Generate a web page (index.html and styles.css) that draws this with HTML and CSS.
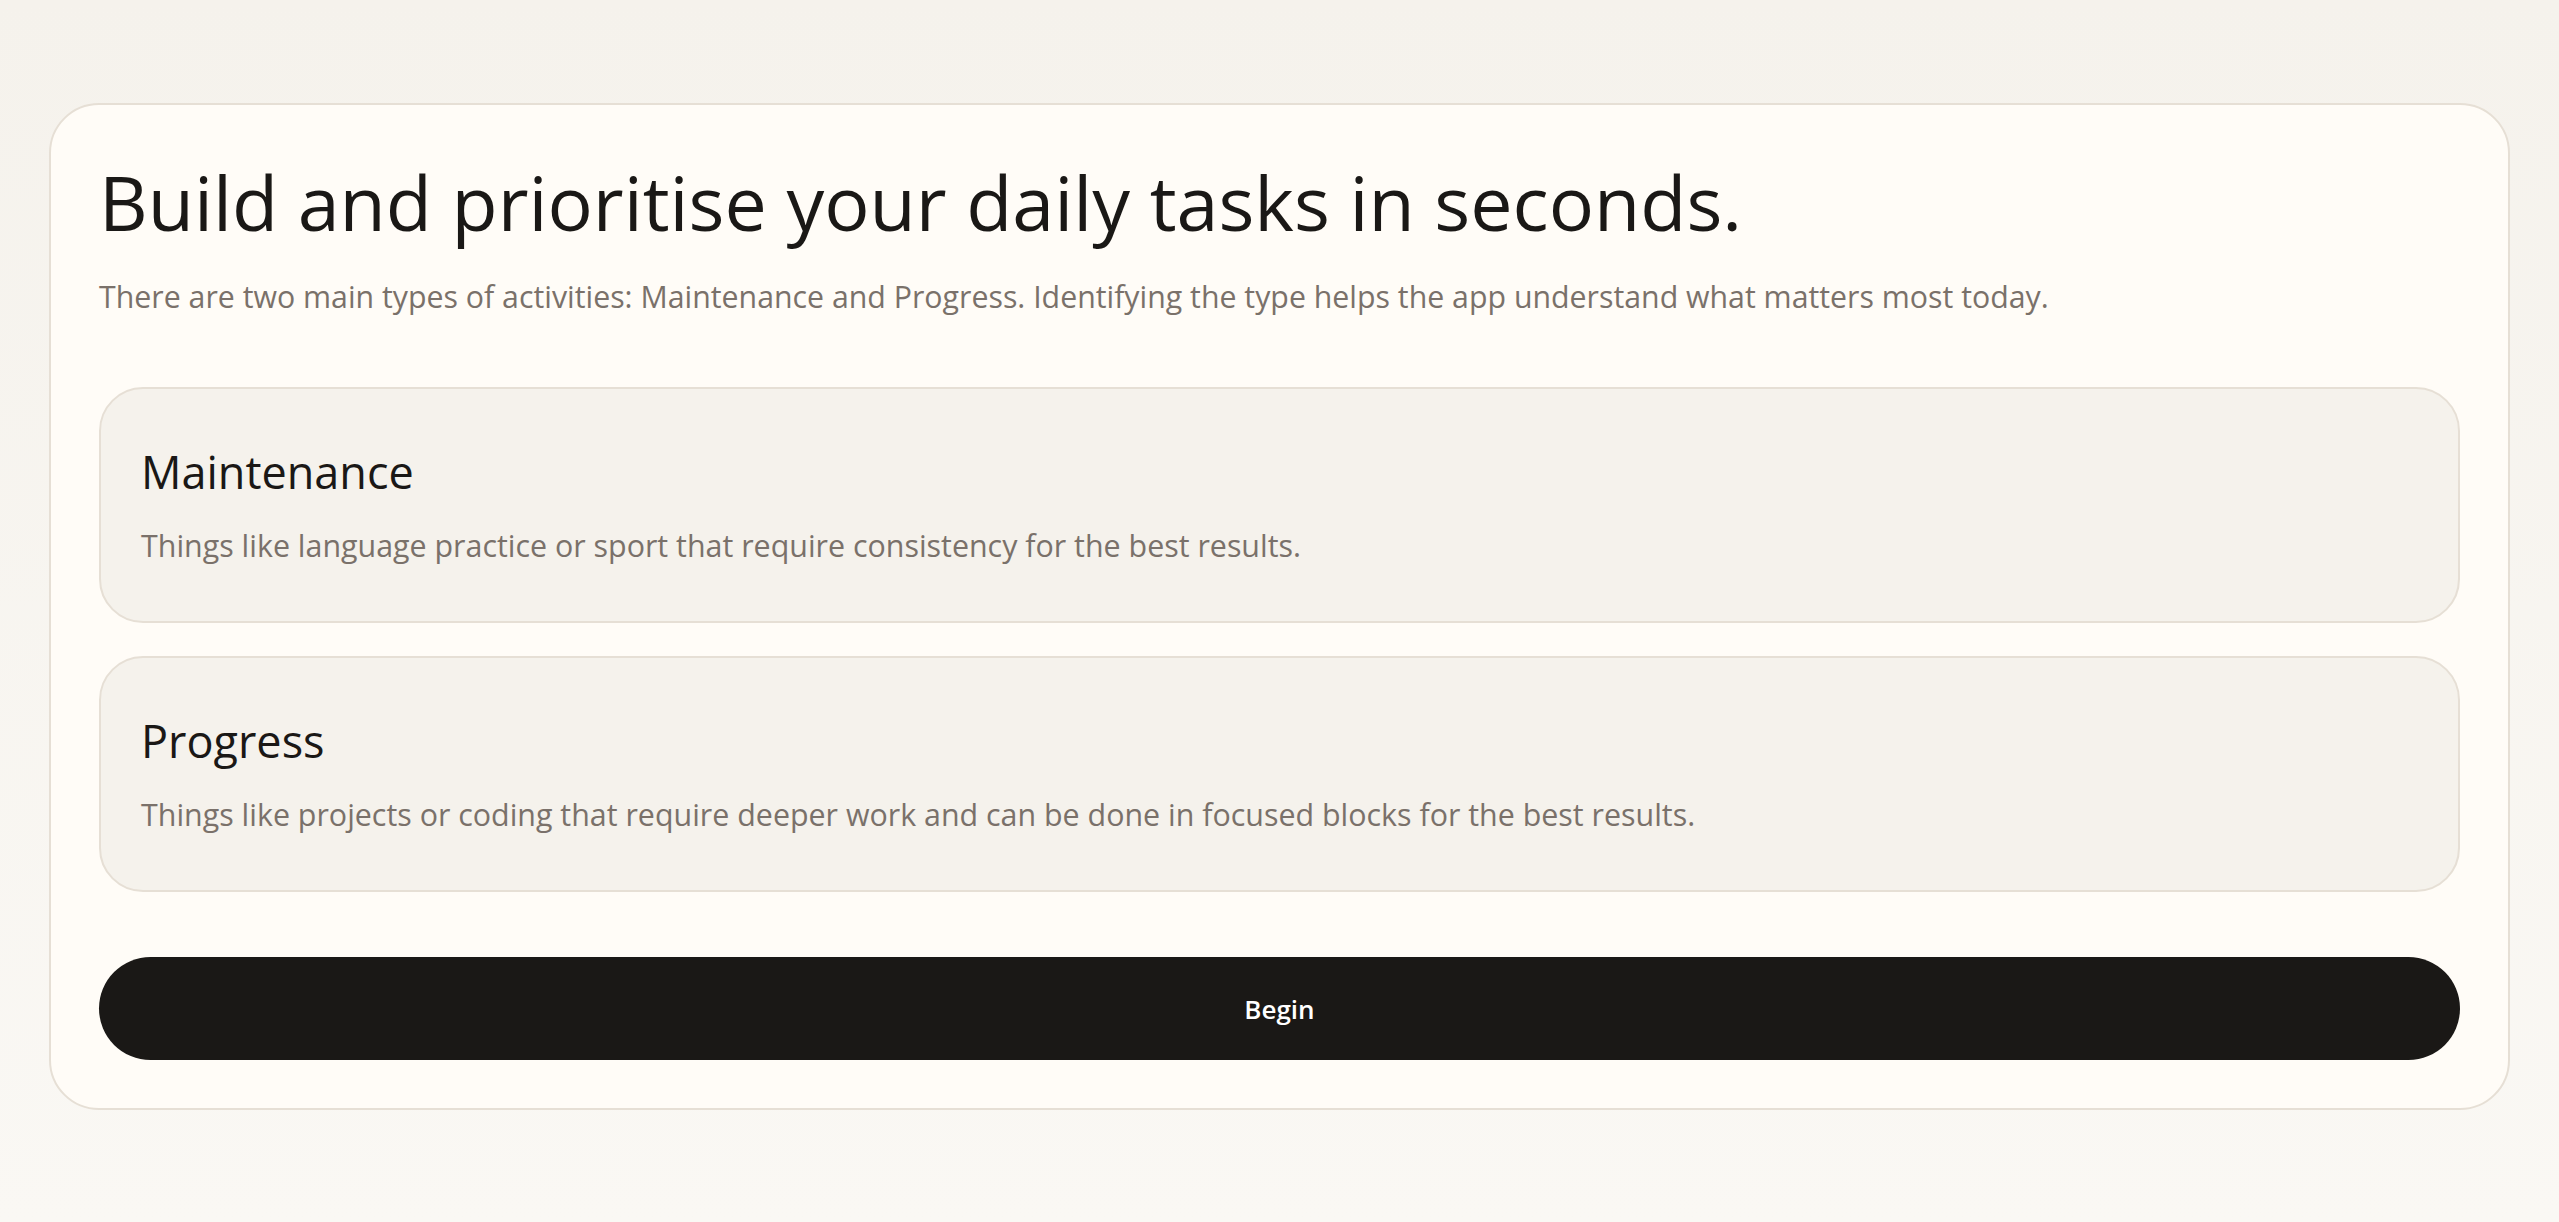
FILE: index.html
```html
<!DOCTYPE html>
<html lang="en">
<head>
<meta charset="utf-8">
<title>Daily tasks</title>
<link rel="stylesheet" href="styles.css">
</head>
<body>
<main class="page">
  <section class="panel">
    <h1 class="title">Build and prioritise your daily tasks in seconds.</h1>
    <p class="lead">There are two main types of activities: Maintenance and Progress. Identifying the type helps the app understand what matters most today.</p>
    <div class="types">
      <article class="type">
        <h2 class="type-name">Maintenance</h2>
        <p class="type-desc">Things like language practice or sport that require consistency for the best results.</p>
      </article>
      <article class="type">
        <h2 class="type-name">Progress</h2>
        <p class="type-desc">Things like projects or coding that require deeper work and can be done in focused blocks for the best results.</p>
      </article>
    </div>
    <button class="begin" type="button">Begin</button>
  </section>
</main>
</body>
</html>
```
FILE: styles.css
```css
* { box-sizing: border-box; }
html, body { margin: 0; }
body {
  min-height: 1222px;
  background: linear-gradient(180deg, #f5f2ec 0%, #faf8f4 100%);
  font-family: "Open Sans", "Noto Sans", sans-serif;
  color: #1a1816;
}
.page {
  padding: 103px 49px 0;
}
.panel {
  background: #fffcf7;
  border: 2px solid #e6dfd5;
  border-radius: 50px;
  padding: 54px 48px 48px;
  display: flex;
  flex-direction: column;
}
.title {
  margin: 0;
  font-size: 75.4px;
  line-height: 86px;
  font-weight: 400;
  color: #1a1816;
}
.lead {
  margin: 29px 0 0;
  font-size: 30.3px;
  line-height: 46px;
  color: #7a716a;
}
.types {
  margin-top: 67px;
  display: flex;
  flex-direction: column;
  gap: 33px;
}
.type {
  background: #f5f2ec;
  border: 2px solid #e6dfd5;
  border-radius: 44px;
  padding: 56px 40px 53px;
}
.type-name {
  margin: 0;
  font-size: 45px;
  line-height: 54px;
  font-weight: 400;
  color: #1a1816;
}
.type-desc {
  margin: 25px 0 0;
  font-size: 30.4px;
  line-height: 44px;
  color: #7a716a;
}
.begin {
  margin-top: 65px;
  height: 103px;
  border: 0;
  border-radius: 52px;
  background: #1a1816;
  color: #ffffff;
  font-family: "Open Sans", "Noto Sans", sans-serif;
  font-size: 26px;
  font-weight: 600;
  cursor: pointer;
}
```
